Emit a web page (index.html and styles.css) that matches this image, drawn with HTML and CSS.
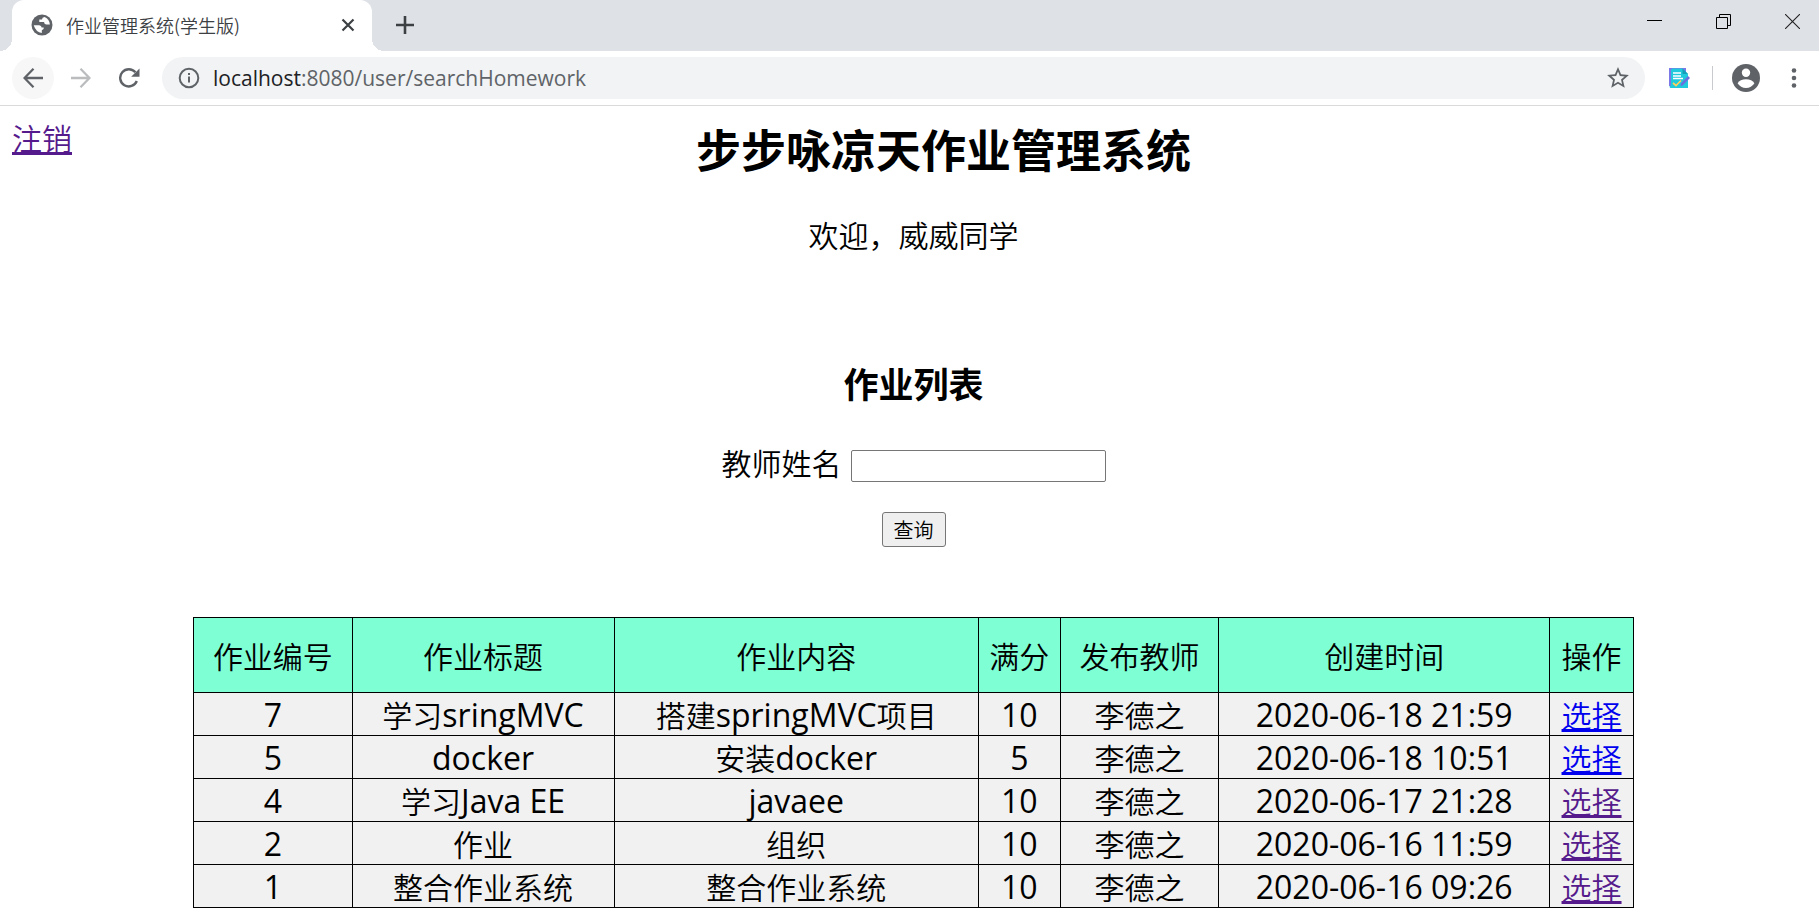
FILE: index.html
```
<!DOCTYPE html>
<html lang="zh-CN">
<head>
<meta charset="utf-8">
<title>作业管理系统(学生版)</title>
<link rel="stylesheet" href="styles.css">
</head>
<body>
<div class="tabstrip">
  <div class="tab">
    <svg class="favicon" viewBox="0 0 22 22"><circle cx="11" cy="11" r="10.500" fill="#5f6368"/><path d="M2.700 11.300 L8.200 11.300 Q10.600 11.500 10.600 13.600 L12.800 13.600 Q13.300 15.500 10.800 16.200 L10.800 18.900 Q5 18.500 2.700 11.300Z M13.600 3 Q11 3.200 11 5.400 L8.300 5.400 L8.300 8 L13 8 Q13.300 10.600 15.500 10.600 L18.900 10.600 Q18.500 5.200 13.600 3Z" fill="#fff"/></svg>
    <span class="tab-title">作业管理系统(学生版)</span>
    <button class="plain tab-close" aria-label="关闭标签页"><svg width="14" height="14" viewBox="0 0 14 14"><path d="M1.500 1.500 12.500 12.500 M12.500 1.500 1.500 12.500" stroke="#3c4043" stroke-width="2.200"/></svg></button>
  </div>
  <button class="plain new-tab" aria-label="新标签页"><svg width="18" height="18" viewBox="0 0 18 18"><path d="M9 0V18M0 9H18" stroke="#3c4043" stroke-width="2.600"/></svg></button>
  <div class="window-controls">
    <button class="plain" aria-label="最小化"><svg width="15" height="15" viewBox="0 0 15 15"><path d="M0 6.500H15" stroke="#000"/></svg></button>
    <button class="plain" aria-label="还原"><svg width="15" height="15" viewBox="0 0 15 15"><path d="M.5 3.500H11.500V14.500H.5Z M3.500 3.500V.5H14.500V11.500H11.500" fill="none" stroke="#000"/></svg></button>
    <button class="plain" aria-label="关闭"><svg width="15" height="15" viewBox="0 0 15 15"><path d="M0 0 15 15 M15 0 0 15" stroke="#222" stroke-width="1.100"/></svg></button>
  </div>
</div>
<div class="toolbar">
  <button class="plain nav back" aria-label="后退"><svg width="20" height="20" viewBox="0 0 20 20"><path d="M20 10H1.500M10.500 .8 1.500 10 10.500 19.200" fill="none" stroke="#5f6368" stroke-width="2.300"/></svg></button>
  <button class="plain nav" aria-label="前进"><svg width="20" height="20" viewBox="0 0 20 20"><path d="M0 10H18.500M9.500 .8 18.500 10 9.500 19.200" fill="none" stroke="#babcbe" stroke-width="2.300"/></svg></button>
  <button class="plain nav" aria-label="重新加载"><svg width="21" height="20" viewBox="0 0 21 20"><path d="M17.800 13A8.600 8.600 0 1 1 16.400 4.300" fill="none" stroke="#5f6368" stroke-width="2.400"/><path d="M20.500 .5V8.800H12.200Z" fill="#5f6368"/></svg></button>
  <div class="omnibox">
    <svg width="22" height="22" viewBox="0 0 22 22"><circle cx="11" cy="11" r="9.300" fill="none" stroke="#5f6368" stroke-width="2"/><path d="M11 9.500V15.500M11 6V8" stroke="#5f6368" stroke-width="2"/></svg>
    <span class="url"><span class="host">localhost</span>:8080/user/searchHomework</span>
    <button class="plain" aria-label="收藏"><svg width="24" height="24" viewBox="1 1 22 22"><path d="M22 9.240l-7.190-.62L12 2 9.190 8.630 2 9.240l5.460 4.730L5.820 21 12 17.270 18.180 21l-1.630-7.030L22 9.240zM12 15.400l-3.760 2.270 1-4.280-3.320-2.880 4.380-.38L12 6.100l1.710 4.040 4.380.38-3.320 2.880 1 4.280L12 15.400z" fill="#5f6368"/></svg></button>
  </div>
  <button class="plain extension" aria-label="扩展程序"><svg width="22" height="22" viewBox="0 0 22 22"><path d="M1 1H18V19H1Z" fill="#7c78e8"/><path d="M3 3Q3 1.500 4.500 1.500H14.500L20 7V21H3Q1.500 21 1.500 19.500Q3 19 3 17Z" fill="#20c9dc"/><path d="M14.500 1.500V7H20Z" fill="#159fb8"/><path d="M5 6H13M5 9H13M5 11.500H15" stroke="#fff" stroke-width="1.400"/><path d="M5 16 8 18.500 13 13.500" fill="none" stroke="#ffd05c" stroke-width="1.700"/><path d="M20 9 22 11 14.500 18.500 12.500 19 13 16.500Z" fill="#6a6fe0"/></svg></button>
  <span class="divider"></span>
  <button class="plain profile" aria-label="个人资料"><svg width="28" height="28" viewBox="0 0 28 28"><circle cx="14" cy="14" r="14" fill="#5f6368"/><circle cx="14" cy="8.800" r="4.200" fill="#fff"/><path d="M5.600 19.200Q8 15.300 14 15.300T22.400 19.200Q19.400 24 14 24T5.600 19.200Z" fill="#fff"/></svg></button>
  <button class="plain menu" aria-label="菜单"><svg width="6" height="20" viewBox="0 0 6 20"><g fill="#5f6368"><circle cx="3" cy="2.500" r="2.300"/><circle cx="3" cy="10" r="2.300"/><circle cx="3" cy="17.500" r="2.300"/></g></svg></button>
</div>
<main class="page">
  <header class="page-header">
    <a class="visited" href="#logout">注销</a>
    <h1>步步咏凉天作业管理系统</h1>
  </header>
  <p class="welcome">欢迎，威威同学</p>
  <h2>作业列表</h2>
  <form class="search">
    <div class="field"><label for="teacher">教师姓名</label><input id="teacher" type="text"></div>
    <button class="submit" type="button">查询</button>
  </form>
  <table class="homework">
    <colgroup><col class="c-id"><col class="c-title"><col class="c-body"><col class="c-score"><col class="c-teacher"><col class="c-time"><col class="c-action"></colgroup>
    <thead><tr><th>作业编号</th><th>作业标题</th><th>作业内容</th><th>满分</th><th>发布教师</th><th>创建时间</th><th>操作</th></tr></thead>
    <tbody>
      <tr><td><span class="latin">7</span></td><td>学习<span class="latin">sringMVC</span></td><td>搭建<span class="latin">springMVC</span>项目</td><td><span class="latin">10</span></td><td>李德之</td><td><span class="latin">2020-06-18 21:59</span></td><td><a href="#hw7">选择</a></td></tr>
      <tr><td><span class="latin">5</span></td><td><span class="latin">docker</span></td><td>安装<span class="latin">docker</span></td><td><span class="latin">5</span></td><td>李德之</td><td><span class="latin">2020-06-18 10:51</span></td><td><a href="#hw5">选择</a></td></tr>
      <tr><td><span class="latin">4</span></td><td>学习<span class="latin">Java EE</span></td><td><span class="latin">javaee</span></td><td><span class="latin">10</span></td><td>李德之</td><td><span class="latin">2020-06-17 21:28</span></td><td><a class="visited" href="#hw4">选择</a></td></tr>
      <tr><td><span class="latin">2</span></td><td>作业</td><td>组织</td><td><span class="latin">10</span></td><td>李德之</td><td><span class="latin">2020-06-16 11:59</span></td><td><a class="visited" href="#hw2">选择</a></td></tr>
      <tr><td><span class="latin">1</span></td><td>整合作业系统</td><td>整合作业系统</td><td><span class="latin">10</span></td><td>李德之</td><td><span class="latin">2020-06-16 09:26</span></td><td><a class="visited" href="#hw1">选择</a></td></tr>
    </tbody>
  </table>
</main>
</body>
</html>
```
FILE: styles.css
```
* { box-sizing: border-box; }
body { margin: 0; background: #fff; color: #000; font-family: "Noto Sans CJK SC", sans-serif; font-weight: 350; }
svg { display: block; flex: none; }
.plain { display: flex; align-items: center; justify-content: center; padding: 0; border: 0; background: none; flex: none; }

.tabstrip { display: flex; align-items: center; height: 51px; padding-left: 12px; background: #dee1e6; }
.tab { position: relative; display: flex; align-items: center; width: 360px; height: 51px; padding: 0 17px 2px 19px; background: #fff; border-radius: 12px 12px 0 0; }
.tab::before, .tab::after { content: ""; position: absolute; bottom: 0; width: 12px; height: 12px; }
.tab::before { left: -12px; background: radial-gradient(circle at 0 0, #dee1e6 12px, #fff 12px); }
.tab::after { right: -12px; background: radial-gradient(circle at 100% 0, #dee1e6 12px, #fff 12px); }
.favicon { width: 22px; height: 22px; }
.tab-title { flex: 1; margin-left: 13px; font-size: 18px; line-height: 26px; color: #3c4043; }
.new-tab { margin-left: 24px; padding-bottom: 2px; }
.window-controls { display: flex; align-self: flex-start; margin-left: auto; padding-right: 19px; height: 42px; gap: 54px; }

.toolbar { display: flex; align-items: center; height: 55px; padding: 0 22px 0 12px; border-bottom: 1px solid #d9dadc; }
.nav { width: 42px; height: 42px; margin-right: 6px; border-radius: 21px; }
.back { background: #f7f7f7; }
.omnibox { display: flex; flex: 1; align-items: center; height: 42px; margin-left: 6px; padding: 0 15px 0 16px; border-radius: 21px; background: #f1f3f4; }
.url { flex: 1; margin-left: 13px; font-family: "Open Sans", sans-serif; font-weight: 400; font-size: 21px; line-height: 30px; color: #5f6368; }
.host { color: #202124; }
.extension { margin-left: 23px; }
.divider { width: 1px; height: 24px; margin-left: 22px; background: #c8cacd; }
.profile { margin-left: 19px; }
.menu { margin-left: 31px; }

.page { padding: 11px 4px 0 12px; font-size: 30px; line-height: 40px; text-align: center; }
.page-header { display: flex; align-items: flex-start; }
h1 { flex: 1; margin: 0; font-size: 45px; line-height: 64px; font-weight: 700; }
.welcome { margin: 33px 0 0; }
h2 { margin: 104px 0 0; font-size: 35px; line-height: 50px; font-weight: 700; }
a { color: #0000ee; text-decoration: underline; text-decoration-thickness: 3px; text-underline-offset: 2px; text-decoration-skip-ink: none; }
a.visited { color: #551a8b; }
.search { display: flex; flex-direction: column; align-items: center; margin-top: 34px; }
.field { display: flex; align-items: flex-end; gap: 9px; }
.field input { width: 255px; height: 32px; padding: 1px 3px; border: 1px solid #767676; border-radius: 2px; background: #fff; font-size: 20px; }
.submit { height: 35px; margin-top: 30px; padding: 0 11px; border: 1px solid #767676; border-radius: 3px; background: #efefef; color: #000; font-family: inherit; font-weight: 350; font-size: 20px; line-height: 30px; }

.homework { width: 79.900%; margin: 70px auto 0; border-collapse: collapse; table-layout: fixed; }
.homework th, .homework td { height: 43px; padding: 0; border: 1px solid #000; line-height: 40px; font-weight: 350; }
.homework th { height: 75px; background: #7fffd4; }
.homework td { background: #f1f1f1; }
.latin { font-family: "Open Sans", sans-serif; font-size: 32px; font-weight: 400; line-height: 1; }
.c-id { width: 11%; }
.c-title { width: 18.200%; }
.c-body { width: 25.300%; }
.c-score { width: 5.700%; }
.c-teacher { width: 11%; }
.c-time { width: 23%; }
.c-action { width: 5.800%; }
```
